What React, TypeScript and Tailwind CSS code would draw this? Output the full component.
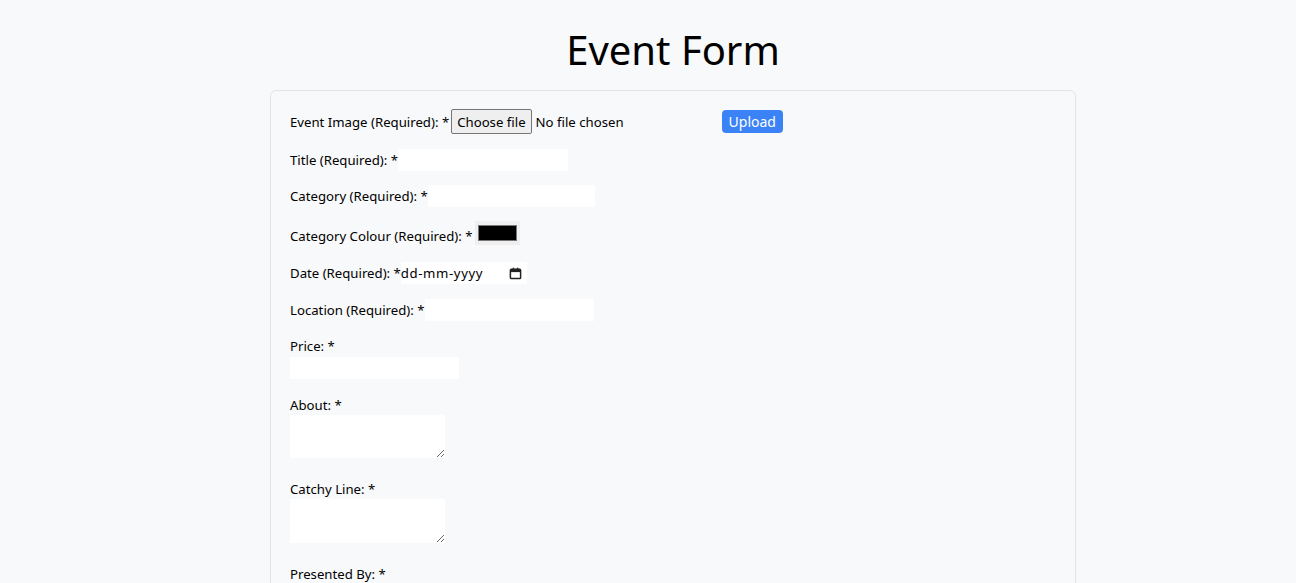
import { useState } from 'react';

const inputCls = "h-[22px] bg-white border-0 outline-none px-[2px] text-[13px] shrink-0";

const CalendarIcon = () => (
    <svg width="13" height="13" viewBox="0 0 14 14" className="shrink-0">
        <rect x="1.5" y="2.5" width="11" height="10" rx="1" fill="none" stroke="#222" strokeWidth="1.6" />
        <rect x="1.5" y="2.5" width="11" height="3" fill="#222" />
        <rect x="4" y="0.8" width="1.6" height="2.5" fill="#222" />
        <rect x="8.4" y="0.8" width="1.6" height="2.5" fill="#222" />
    </svg>
);

const App = () => {
    const [fileName, setFileName] = useState("");

    return (
        <div className="min-h-[583px] bg-[#f8f9fa] pl-[50px] text-black font-['Noto_Sans',sans-serif]">
            <div className="w-[806px] mx-auto">
                <h1 className="h-[90px] pt-[28px] text-center text-[40px] leading-[44px] font-normal">
                    Event Form
                </h1>
                <form className="border border-[#e2e4e7] rounded-md px-[19px] pt-[18px] pb-6 text-[13.2px] leading-5">
                    <div className="flex items-center h-[25px]">
                        <span>Event Image (Required): *</span>
                        <label className="ml-[2px] h-[25px] px-[5px] border border-[#767676] bg-[#efefef] rounded-[2px] flex items-center cursor-pointer">
                            Choose file
                            <input
                                type="file"
                                className="hidden"
                                onChange={(e) => setFileName(e.target.files?.[0]?.name ?? "")}
                            />
                        </label>
                        <span className="ml-1 w-[186px]">{fileName || "No file chosen"}</span>
                        <button
                            type="button"
                            className="h-[23px] px-[7px] bg-[#3b82f6] text-white text-[14px] rounded-[4px] leading-none"
                        >
                            Upload
                        </button>
                    </div>

                    <div className="flex items-center mt-[15px]">
                        <span>Title (Required): *</span>
                        <input type="text" className={`${inputCls} w-[170px]`} />
                    </div>

                    <div className="flex items-center mt-[14px]">
                        <span>Category (Required): *</span>
                        <input type="text" className={`${inputCls} w-[167px]`} />
                    </div>

                    <div className="flex items-end mt-[14px] h-[24px]">
                        <span className="leading-[18px]">Category Colour (Required): *</span>
                        <div className="w-[45px] h-[24px] shrink-0 ml-[2px] bg-[#efefef] px-[3px] py-[4px] flex">
                            <div className="flex-1 bg-black border border-[#777]"></div>
                        </div>
                    </div>

                    <div className="flex items-center mt-[17px]">
                        <span>Date (Required): *</span>
                        <div className="h-[22px] w-[126px] shrink-0 bg-white flex items-center pr-[5px]">
                            <input
                                type="text"
                                placeholder="dd-mm-yyyy"
                                className="w-full min-w-0 h-full outline-none px-0 text-[13.2px] tracking-[0.6px] placeholder:text-black"
                            />
                            <CalendarIcon />
                        </div>
                    </div>

                    <div className="flex items-center mt-[15px]">
                        <span>Location (Required): *</span>
                        <input type="text" className={`${inputCls} w-[169px]`} />
                    </div>

                    <div className="mt-[15px]">
                        <div>Price: *</div>
                        <input type="text" className={`${inputCls} w-[169px] block mt-[1px]`} />
                    </div>

                    <div className="mt-[16px]">
                        <div>About: *</div>
                        <textarea className="block w-[155px] h-[43px] bg-white outline-none text-[13px]"></textarea>
                    </div>

                    <div className="mt-[21px]">
                        <div>Catchy Line: *</div>
                        <textarea className="block w-[155px] h-[44px] bg-white outline-none text-[13px]"></textarea>
                    </div>

                    <div className="mt-[21px]">
                        <div>Presented By: *</div>
                        <input type="text" className={`${inputCls} w-[169px] block mt-[1px]`} />
                    </div>
                </form>
            </div>
        </div>
    );
};

export default App;
